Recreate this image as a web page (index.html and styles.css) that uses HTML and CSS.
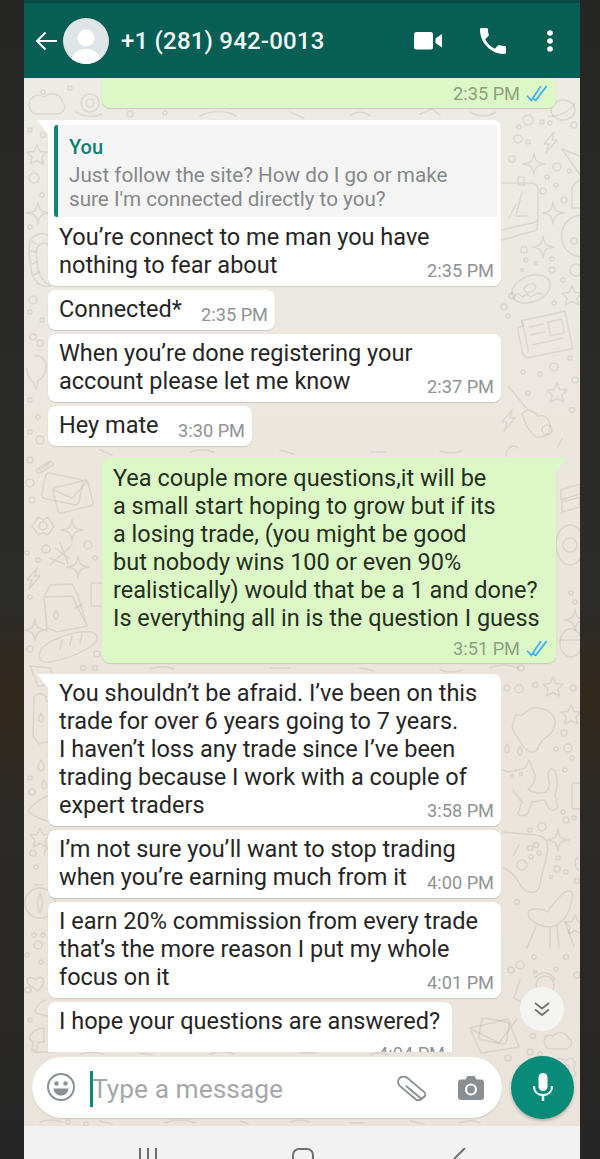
FILE: index.html
```html
<!DOCTYPE html>
<html lang="en">
<head>
<meta charset="utf-8">
<title>WhatsApp chat</title>
<link rel="stylesheet" href="styles.css">
</head>
<body>
<div class="phone">
  <header class="appbar">
    <svg class="back" viewBox="0 0 24 20" width="24" height="20"><path d="M22 10H2M10.500 1.500 2 10l8.500 8.500" fill="none" stroke="#fff" stroke-width="2"/></svg>
    <div class="avatar">
      <svg viewBox="0 0 46 46" width="46" height="46"><circle cx="23" cy="20" r="8.500" fill="#fff"/><ellipse cx="23" cy="44" rx="15" ry="13" fill="#fff"/></svg>
    </div>
    <div class="name">+1 (281) 942-0013</div>
    <svg class="ic-video" viewBox="0 0 28 18" width="28" height="18"><rect x="0" y="0" width="19" height="17.500" rx="2.500" fill="#fff"/><path d="M21.500 6.500 28 2v13.500l-6.500-4.500z" fill="#fff"/></svg>
    <svg class="ic-phone" viewBox="3 3 18 18" width="26" height="26"><path d="M6.620 10.790c1.440 2.830 3.760 5.140 6.590 6.590l2.200-2.200c.27-.27.67-.36 1.020-.24 1.120.37 2.330.57 3.570.57.550 0 1 .45 1 1V20c0 .55-.45 1-1 1-9.390 0-17-7.610-17-17 0-.55.45-1 1-1h3.500c.55 0 1 .45 1 1 0 1.250.2 2.450.57 3.570.11.35.03.74-.25 1.020l-2.200 2.200z" fill="#fff"/></svg>
    <svg class="ic-dots" viewBox="0 0 6 22" width="6" height="22"><circle cx="3" cy="3" r="2.800" fill="#fff"/><circle cx="3" cy="11" r="2.800" fill="#fff"/><circle cx="3" cy="19" r="2.800" fill="#fff"/></svg>
  </header>

  <main class="chat">
    <svg class="doodles" viewBox="0 0 556 1048" width="556" height="1048" fill="none">
      <defs>
        <path id="s4" d="M0-11C1-3 3-1 11 0 3 1 1 3 0 11-1 3-3 1-11 0-3-1-1-3 0-11z"/>
        <path id="s5" d="M0-10 3-3.500 10-3 5 2 6.500 9 0 5.500-6.500 9-5 2-10-3-3-3.500z"/>
        <path id="bolt" d="M4-10-6 2h5l-3 9L7-2H2z"/>
      </defs>
      <g transform="translate(-24 -78)" stroke="#6e665a" stroke-opacity=".13" stroke-width="1.500" stroke-linejoin="round" stroke-linecap="round">
        <!-- top strip -->
        <path d="M30 108c-4-10 8-16 14-11 6-6 18-3 18 5 6 4 2 13-8 12H38c-5 0-8-3-8-6z"/>
        <circle cx="90" cy="103" r="9"/><circle cx="90" cy="103" r="4"/><path d="M76 112c8 5 18 6 26 2"/>
        <circle cx="43" cy="92" r="2"/><circle cx="70" cy="88" r="2"/><circle cx="130" cy="114" r="3"/><circle cx="165" cy="113" r="2"/>
        <path d="M200 116c10-6 26-6 36 0M290 112l14 6M350 116c6-5 14-5 20 0M420 114l12-5 8 6M470 112c8 5 18 5 26 0"/>
        <ellipse cx="563" cy="110" rx="12" ry="10"/><path d="M548 116c8 2 22-4 27-13"/>
        <!-- right upper -->
        <circle cx="528" cy="120" r="5"/><circle cx="518" cy="139" r="4"/><circle cx="542" cy="122" r="2"/><circle cx="550" cy="123" r="2"/><circle cx="519" cy="127" r="2"/><circle cx="574" cy="125" r="3"/><circle cx="528" cy="142" r="2"/>
        <use href="#bolt" x="550" y="142"/>
        <path d="M562 149 582 157V178z"/>
        <use href="#s4" x="534" y="164"/>
        <circle cx="557" cy="167" r="4"/><circle cx="569" cy="171" r="2"/><circle cx="512" cy="159" r="3"/><circle cx="547" cy="177" r="2"/><circle cx="556" cy="185" r="2"/><circle cx="543" cy="191" r="3"/><circle cx="564" cy="200" r="3"/>
        <path d="M502 183h30a6 6 0 0 1 6 6v28a6 6 0 0 1-6 6l-30 7M538 218l-1 12-35 10M516 204l-7 14M522 192l-6 24h12M518 177h6v8h-6z"/>
        <use href="#s4" x="553" y="213"/><use href="#s4" x="543" y="247"/>
        <path d="M580 215c-12 2-20 12-18 24 1 10 8 16 18 18M572 188c3-8 10-9 12-6v26h-12z"/><circle cx="574" cy="241" r="3"/><circle cx="576" cy="270" r="6"/>
        <rect x="521" y="247" width="6" height="6" rx="1.500"/><circle cx="526" cy="260" r="2"/><circle cx="552" cy="270" r="3"/><circle cx="536" cy="263" r="1.500"/><circle cx="552" cy="259" r="2"/><circle cx="522" cy="270" r="1.500"/>
        <ellipse cx="531" cy="289" rx="20" ry="13" transform="rotate(-22 531 289)"/><ellipse cx="530" cy="288" rx="6" ry="4" transform="rotate(-22 530 288)"/><path d="M514 296l4-3 4 4 5-3 4 3 6-4 5 1"/>
        <use href="#s5" x="572" y="296"/><circle cx="512" cy="296" r="3"/><circle cx="504" cy="307" r="3"/><circle cx="508" cy="316" r="2"/><circle cx="563" cy="280" r="2"/><circle cx="554" cy="303" r="2"/>
        <g transform="rotate(-12 545 338)"><path d="M526 316h44v38h-44a6 6 0 0 1-6-6v-26h6z"/><path d="M526 316v32M532 324h14M532 332h14M532 342h30"/><rect x="551" y="323" width="14" height="14"/></g>
        <circle cx="554" cy="367" r="4"/><circle cx="523" cy="372" r="2"/><circle cx="540" cy="374" r="2"/><circle cx="570" cy="358" r="2"/><circle cx="575" cy="380" r="3"/>
        <!-- right middle -->
        <path d="M508 386l20 24M522 414c6-7 12-3 16 2 7-2 12 3 12 11s-6 11-14 10c-5-4-9-8-14-23z"/><circle cx="547" cy="430" r="5"/>
        <use href="#s5" x="557" y="393"/><circle cx="572" cy="410" r="2.500"/><circle cx="528" cy="393" r="2"/>
        <use href="#bolt" x="508" y="420"/>
        <path d="M506 456c0-10 8-12 12-8"/><path d="M558 447l4-8"/>
        <path d="M561 490l19-6v10l-19 6zM562 502l18-5v10l-18 5z"/>
        <ellipse cx="570" cy="545" rx="14" ry="20"/><circle cx="570" cy="545" r="7"/><circle cx="571" cy="593" r="2"/><circle cx="575" cy="602" r="2"/>
        <use href="#s4" x="575" y="620"/><ellipse cx="571" cy="643" rx="11" ry="14"/><path d="M560 640h22"/>
        <path d="M490 668c8-4 20-4 28 0M440 670c8 3 14 3 22 0M360 668l14 3M270 668h20M150 669c8-3 16-3 24 0"/>
        <circle cx="83" cy="668" r="2.500"/><circle cx="95" cy="668" r="2.500"/><circle cx="521" cy="668" r="3"/>
        <!-- right lower -->
        <circle cx="519" cy="689" r="4"/><circle cx="507" cy="688" r="3"/><circle cx="535" cy="685" r="2.500"/><use href="#s5" x="553" y="687"/><use href="#s5" x="571" y="715"/><circle cx="573" cy="688" r="3"/>
        <path d="M516 714c8 6 10-8 22-6 12 1 20 10 16 20-3 9-14 10-16 20-3 7-12 4-17-5-4-7-11-14-8-19 1-3 2-8 3-10z"/>
        <path d="M507 744c-3 5-3 8 0 9 3-1 3-4 0-9zM520 746c-3 5-3 8 0 9 3-1 3-4 0-9z"/>
        <circle cx="564" cy="733" r="3"/><circle cx="568" cy="748" r="4"/><circle cx="556" cy="749" r="2"/><circle cx="572" cy="758" r="2"/><circle cx="565" cy="770" r="2"/>
        <path d="M503 770l6 2 16-4 4-8 5 12c3 6 0 13-6 17 4 4 12 5 18 3 5-4 3-10 2-18 1-6 5-6 7-3 3 8 2 18 0 24l3 12c-4 5-8 3-9 1l-5-8-12 2-4 11c-3 4-8 3-10 1l4-12-9-12"/>
        <circle cx="512" cy="776" r="1.500"/><circle cx="521" cy="774" r="1.500"/>
        <path d="M580 783h-6a2 2 0 0 0-2 2v22a2 2 0 0 0 2 2h6"/>
        <circle cx="563" cy="812" r="2"/><circle cx="566" cy="820" r="3"/><circle cx="574" cy="818" r="2"/><circle cx="542" cy="827" r="4"/><circle cx="530" cy="830" r="2"/>
        <path d="M503 832c15 2 28 2 37 4 8 2 9 12 6 22-3 11-5 22-7 30-4 7-13 5-18-2-5-10-10-15-18-18"/>
        <circle cx="522" cy="865" r="5"/><circle cx="530" cy="848" r="2.500"/><circle cx="536" cy="845" r="2.500"/><circle cx="539" cy="853" r="2"/><circle cx="531" cy="857" r="2"/><path d="M514 855l5-10"/>
        <use href="#s4" x="558" y="840" /><circle cx="557" cy="869" r="3"/><circle cx="566" cy="872" r="2"/><circle cx="577" cy="881" r="2.500"/><circle cx="558" cy="858" r="2"/><circle cx="551" cy="877" r="1.500"/><path d="M578 857c-4 3-4 8 0 13"/>
        <path d="M530 910c6-2 14-1 18 2 4-8 11-15 17-20 6-3 9 1 7 7-2 12-8 24-18 27-8 3-20-2-25-9-1-3-1-6 1-7z"/><path d="M536 926l-9 22M550 928l0 20M557 926l2 22M565 922l9 24"/>
        <circle cx="517" cy="902" r="2.500"/><use href="#s5" x="575" y="925"/>
        <circle cx="520" cy="965" r="4"/><circle cx="511" cy="970" r="3"/><circle cx="534" cy="957" r="2"/><circle cx="566" cy="957" r="2.500"/><circle cx="577" cy="975" r="3"/><circle cx="556" cy="969" r="2"/><circle cx="535" cy="972" r="1.500"/>
        <path d="M520 980l-6 18 18 10M535 978c6-8 16-6 20 2"/><circle cx="545" cy="985" r="9"/>
        <path d="M470 1028l38-9 11 28-38 6zM473 1030l26 13 18-24"/><rect x="480" y="1020" width="28" height="22" rx="3" transform="rotate(10 494 1031)"/>
        <path d="M545 1044c-3-6 3-11 8-8 4-5 14-4 15 2 6 2 4 10-3 11h-14c-3 0-5-2-6-5z"/><circle cx="533" cy="1036" r="2.500"/><circle cx="530" cy="1052" r="3"/>
        <!-- between messages and field -->
        <path d="M34 1052h18M80 1054c8-2 16-2 24 0M140 1053l12 2M210 1054c8-3 16-3 24 0M300 1053h16M370 1055c6-3 12-3 18 0"/>
        <path d="M40 1122c8-3 14-3 22 0M100 1121l12 3M165 1123c10-4 20-4 30 0M240 1121l8 3M290 1122c6-2 14-2 20 0M350 1123h14M410 1121l14 3M460 1123c8-3 14-3 20 0"/><circle cx="68" cy="1122" r="2"/><circle cx="86" cy="1124" r="2"/>
        <path d="M558 1058l8 2 6-2 4 6-3 5 3 5-4 4-6-1"/><circle cx="566" cy="1068" r="3"/><circle cx="508" cy="1058" r="3"/><circle cx="540" cy="1054" r="2"/>
        <!-- left upper -->
        <use href="#s5" x="37" y="155"/><circle cx="34" cy="178" r="5"/><circle cx="43" cy="135" r="2.500"/><circle cx="30" cy="130" r="2"/><circle cx="42" cy="195" r="2"/>
        <use href="#s4" x="38" y="213"/><circle cx="30" cy="227" r="2"/>
        <path d="M30 240c6-8 18-8 20-2l-2 6c-6-2-11 0-12 8l2 18c2 8 6 12 12 16-8 2-14-2-18-12-2-10-4-24-2-34z"/><path d="M36 244l-4-3M36 252l-5-1M37 262l-5 2M39 272l-5 3"/>
        <circle cx="33" cy="300" r="4"/><circle cx="30" cy="312" r="2"/><circle cx="42" cy="320" r="2"/><circle cx="33" cy="337" r="3"/><circle cx="40" cy="343" r="3"/>
        <path d="M34 356c5-2 11 2 12 9 1 8-4 13-8 16l-2 8-3-7c-5-4-6-10-6-14"/>
        <circle cx="30" cy="400" r="2"/><circle cx="38" cy="417" r="2"/><circle cx="40" cy="440" r="4"/><circle cx="30" cy="432" r="2"/>
        <path d="M100 450l12 5M190 452c8-3 16-3 24 0M280 450l14 4M370 452h16M440 451c8 3 14 3 22 0"/>
        <!-- left middle -->
        <path d="M36 470l14-9 4 3-14 9a3 3 0 0 1-4-3zM40 470l10-7"/>
        <circle cx="30" cy="460" r="3"/><circle cx="30" cy="483" r="4"/><circle cx="32" cy="500" r="3"/>
        <g transform="rotate(12 62 490)"><rect x="43" y="476" width="38" height="26" rx="4"/></g>
        <g transform="rotate(-14 72 497)"><rect x="55" y="484" width="36" height="26" rx="3"/><path d="M56 486l16 12 18-12"/></g>
        <path d="M38 517l5 3 5-3 3 5 3 4-3 5-3 4-5-2-5 2-3-5-3-4 3-4z"/><circle cx="43" cy="526" r="4"/>
        <use href="#s4" x="72" y="530"/><circle cx="88" cy="545" r="4"/><circle cx="46" cy="549" r="4"/><circle cx="38" cy="560" r="2"/><circle cx="27" cy="553" r="2"/>
        <path d="M60 542l8 22M72 545l-22 20M55 548l14 10M50 558l14 6"/>
        <use href="#s4" x="78" y="567"/><circle cx="95" cy="558" r="2"/>
        <use href="#bolt" x="33" y="578"/>
        <path d="M44 597l6-12 22-1 6 12 9 30-30 6-10-4zM44 597l28-1 15 30M47 632l-3-35M50 585l22-1"/>
        <path d="M56 610c-3 5-3 8 0 9 3-1 3-4 0-9zM75 608l8-4"/>
        <path d="M104 583h-10a3 3 0 0 0-3 3v20h13"/>
        <circle cx="30" cy="597" r="2"/><use href="#s4" x="35" y="630"/><circle cx="30" cy="649" r="3"/>
        <path d="M40 659c-3-6 2-13 12-18 14-7 30-11 40-9 8 3 6 10-2 15-12 8-30 14-42 15-4 0-7-1-8-3zM62 640l-2 9M72 636l-2 9M82 634l-2 9"/>
        <circle cx="97" cy="654" r="3"/>
        <!-- left lower -->
        <path d="M30 666l20 2 5 16-17 2z"/>
        <path d="M34 700v-4l6-3 6 3v4c4 3 5 6 5 10l3 30-15 4-6-8z"/><path d="M41 713c-3 5-3 8 0 9 3-1 3-4 0-9z"/>
        <path d="M41 760c-4 6-4 10 0 11 4-1 4-5 0-11zM44 780c-3 5-3 8 0 9 3-1 3-4 0-9z"/><circle cx="32" cy="792" r="3"/><circle cx="30" cy="778" r="2"/>
        <path d="M47 796c-8 4-16 10-19 15 6 6 14 8 19 10"/>
        <use href="#s5" x="40" y="838"/><circle cx="33" cy="853" r="3"/><circle cx="36" cy="867" r="2"/><path d="M48 848a6 6 0 0 0-3 8"/>
        <circle cx="40" cy="903" r="15"/><path d="M40 893l3 10-3 10-3-10zM34 885h8"/>
        <circle cx="34" cy="935" r="2"/><circle cx="43" cy="935" r="2"/><circle cx="38" cy="945" r="4"/><circle cx="27" cy="955" r="2"/><circle cx="41" cy="962" r="2"/>
        <path d="M36 980c-5-4-9-3-9 1 0 4 6 6 11 10 4-4 7-8 5-12-2-3-5-2-7 1z"/><circle cx="28" cy="990" r="3"/>
        <path d="M46 1000c-6 2-10 6-11 12 2 2 8 3 13 4"/>
        <path d="M30 1038c0-6 8-10 14-10v14h-6l-1 8h-5l1-8c-2-1-3-2-3-4z"/><circle cx="30" cy="1020" r="2"/>
      </g>
    </svg>

    <div class="list">
      <div class="bubble sent first">
        <div class="meta-line"><span class="time">2:35 PM</span><svg class="ticks" viewBox="0 0 19 15" width="22" height="17"><path d="M.8 9.500 4.500 13.500 13 1M8 14 18 1M6.200 11.500 8 14" fill="none" stroke="#3fb0ea" stroke-width="1.500"/></svg></div>
      </div>

      <div class="bubble recv wide tail reply">
        <div class="quote">
          <div class="quote-who">You</div>
          <div class="quote-text">Just follow the site? How do I go or make<br>sure I'm connected directly to you?</div>
        </div>
        <div class="row"><div class="text">You’re connect to me man you have<br>nothing to fear about</div><span class="time">2:35 PM</span></div>
      </div>

      <div class="bubble recv w-connected">
        <div class="row"><div class="text">Connected*</div><span class="time">2:35 PM</span></div>
      </div>

      <div class="bubble recv wide">
        <div class="row"><div class="text">When you’re done registering your<br>account please let me know</div><span class="time">2:37 PM</span></div>
      </div>

      <div class="bubble recv w-hey">
        <div class="row"><div class="text">Hey mate</div><span class="time">3:30 PM</span></div>
      </div>

      <div class="bubble sent long tail-right">
        <div class="text">Yea couple more questions,it will be<br>a small start hoping to grow but if its<br>a losing trade, (you might be good<br>but nobody wins 100 or even 90%<br>realistically) would that be a 1 and done?<br>Is everything all in is the question I guess</div>
        <div class="meta-line"><span class="time">3:51 PM</span><svg class="ticks" viewBox="0 0 19 15" width="22" height="17"><path d="M.8 9.500 4.500 13.500 13 1M8 14 18 1M6.200 11.500 8 14" fill="none" stroke="#3fb0ea" stroke-width="1.500"/></svg></div>
      </div>

      <div class="bubble recv wide tail gap-big">
        <div class="row"><div class="text">You shouldn’t be afraid. I’ve been on this<br>trade for over 6 years going to 7 years.<br>I haven’t loss any trade since I’ve been<br>trading because I work with a couple of<br>expert traders</div><span class="time">3:58 PM</span></div>
      </div>

      <div class="bubble recv wide">
        <div class="row"><div class="text">I’m not sure you’ll want to stop trading<br>when you’re earning much from it</div><span class="time">4:00 PM</span></div>
      </div>

      <div class="bubble recv wide">
        <div class="row"><div class="text">I earn 20% commission from every trade<br>that’s the more reason I put my whole<br>focus on it</div><span class="time">4:01 PM</span></div>
      </div>

      <div class="bubble recv w-last">
        <div class="text">I hope your questions are answered?</div>
        <div class="meta-line last-time"><span class="time">4:04 PM</span></div>
      </div>
    </div>

    <button class="scroll-down" type="button" aria-label="Scroll down">
      <svg viewBox="0 0 18 16" width="18" height="16"><path d="M2 2l7 5.500L16 2M2 8.500 9 14l7-5.500" fill="none" stroke="#6f7477" stroke-width="1.800"/></svg>
    </button>

    <div class="composer">
      <div class="field">
        <svg class="ic-smile" viewBox="0 0 30 30" width="30" height="30"><circle cx="15" cy="15" r="13" fill="none" stroke="#8b9094" stroke-width="2"/><circle cx="10.500" cy="11.500" r="2.200" fill="#8b9094"/><circle cx="19.500" cy="11.500" r="2.200" fill="#8b9094"/><path d="M7.500 16.500h15c-.5 4.500-3.500 7-7.500 7s-7-2.500-7.500-7z" fill="#8b9094"/></svg>
        <span class="caret"></span>
        <span class="placeholder">Type a message</span>
        <svg class="ic-clip" viewBox="-15 -13 30 26" width="30" height="26"><g transform="rotate(40) translate(0 -2)"><path d="M-6 3.500H11a3.500 3.500 0 0 0 0-7H-11a5.500 5.500 0 0 0 0 11H11a7.500 7.500 0 0 0 3-7" fill="none" stroke="#8b9094" stroke-width="1.900" stroke-linecap="round"/></g></svg>
        <svg class="ic-cam" viewBox="0 0 26 24" width="26" height="24"><path d="M3 3.500h4.500L9.500 0h7l2 3.500H23a3 3 0 0 1 3 3V21a3 3 0 0 1-3 3H3a3 3 0 0 1-3-3V6.500a3 3 0 0 1 3-3z" fill="#8b8f92"/><circle cx="13" cy="13.500" r="5" fill="none" stroke="#fff" stroke-width="2.200"/></svg>
      </div>
      <button class="mic" type="button" aria-label="Record">
        <svg viewBox="0 0 20 28" width="20" height="28"><rect x="5.500" y="0" width="9" height="18" rx="4.500" fill="#fff"/><path d="M1 13c0 6 4 9 9 9s9-3 9-9" fill="none" stroke="#fff" stroke-width="2"/><path d="M10 21v7" stroke="#fff" stroke-width="2.400"/></svg>
      </button>
    </div>
  </main>

  <nav class="navbar">
    <svg viewBox="0 0 20 12" width="20" height="12" class="nav-a"><path d="M2 0v12M10 0v12M18 0v12" stroke="#6f6f6f" stroke-width="2"/></svg>
    <svg viewBox="0 0 22 12" width="22" height="12" class="nav-b"><path d="M1 12V7a6 6 0 0 1 6-6h8a6 6 0 0 1 6 6v5" fill="none" stroke="#6f6f6f" stroke-width="2"/></svg>
    <svg viewBox="0 0 14 12" width="14" height="12" class="nav-c"><path d="M13 0 2 11" fill="none" stroke="#6f6f6f" stroke-width="2"/></svg>
  </nav>
</div>
</body>
</html>
```
FILE: styles.css
```css
* { box-sizing: border-box; }
html, body { margin: 0; height: 100%; }
body {
  width: 600px;
  height: 1159px;
  overflow: hidden;
  padding: 0 20px 0 24px;
  background: linear-gradient(180deg, #262625 0%, #2c2c2b 52%, #33291c 60%, #2c2a27 70%, #262626 100%);
  font-family: Roboto, "Noto Sans", "Liberation Sans", sans-serif;
}
.phone { width: 556px; height: 1159px; display: flex; flex-direction: column; }

.appbar {
  flex: 0 0 78px;
  display: flex;
  align-items: center;
  padding: 3px 0 0 11px;
  background: linear-gradient(180deg, #0a4a44 0, #0a4a44 3px, #075e55 3px);
  color: #fff;
}
.back { flex: none; }
.avatar {
  flex: none;
  width: 46px;
  height: 46px;
  margin-left: 4px;
  border-radius: 50%;
  background: #dfe5e7;
  overflow: hidden;
}
.avatar svg { display: block; }
.name { flex: none; margin-left: 12px; width: 280px; font-size: 24px; font-weight: 500; letter-spacing: .2px; white-space: nowrap; color: #f1f7f6; }
.ic-video { flex: none; margin-left: 13px; }
.ic-phone { flex: none; margin-left: 38px; }
.ic-dots { flex: none; margin-left: 41px; }

.chat {
  position: relative;
  flex: 1;
  min-height: 0;
  display: flex;
  flex-direction: column;
  overflow: hidden;
  background: linear-gradient(180deg, #ecebe4 0%, #ece9e2 20%, #ebe5dd 45%, #ebe4dd 100%);
}
.doodles { position: absolute; left: 0; top: 0; }

.list { position: relative; flex: 1; min-height: 0; overflow: hidden; display: flex; flex-direction: column; }

.bubble {
  position: relative;
  flex: none;
  padding: 5px 7px 7px 11px;
  margin: 4px 0 0 24px;
  border-radius: 8px;
  background: #fff;
  box-shadow: 0 1px 1px rgba(90, 80, 60, .2);
  color: #262626;
}
.sent { background: #dcf8c6; margin-left: 78px; width: 454px; color: #24301c; }
.first { height: 30px; margin-top: 0; padding: 0 8px 0 0; border-radius: 0 0 8px 8px; }
.wide { width: 453px; }
.w-connected { width: 227px; }
.w-hey { width: 204px; }
.w-last { width: 404px; }
.reply { margin-top: 12px; }
.long { margin-top: 12px; padding: 6px 8px 4px 11px; border-top-right-radius: 0; }
.gap-big { margin-top: 11px; }
.tail { border-top-left-radius: 0; }
.tail::before {
  content: "";
  position: absolute;
  left: -11px;
  top: 0;
  border-top: 14px solid #fff;
  border-left: 11px solid transparent;
}
.tail-right::after {
  content: "";
  position: absolute;
  right: -11px;
  top: 0;
  border-top: 14px solid #dcf8c6;
  border-right: 11px solid transparent;
}
.text { font-size: 23.500px; line-height: 28px; white-space: nowrap; }
.row { display: flex; justify-content: space-between; align-items: flex-end; }
.row .text { flex: 1 1 0; min-width: 0; }
.time { flex: none; font-size: 18.200px; line-height: 22px; color: #8f9395; transform: translateY(3px); }
.sent .time { color: #8ea17f; transform: translateY(1px); }
.meta-line { display: flex; justify-content: flex-end; align-items: center; gap: 6px; }
.long .meta-line { margin-top: 5px; }
.first .meta-line { height: 30px; }
.ticks { flex: none; }
.last-time { margin-top: 5px; }

.quote {
  margin: 0 -3px 6px -5px;
  height: 92px;
  padding: 8px 10px 0 11px;
  border-left: 4px solid #11857a;
  border-radius: 3px;
  background: #f5f5f5;
}
.quote-who { font-size: 20px; line-height: 28px; font-weight: 500; color: #0b8174; }
.quote-text { margin-top: 2px; font-size: 20.650px; line-height: 24px; color: #85888a; white-space: nowrap; }

.scroll-down {
  position: absolute;
  left: 496px;
  top: 909px;
  width: 44px;
  height: 44px;
  padding: 0;
  display: flex;
  align-items: center;
  justify-content: center;
  border: 0;
  border-radius: 50%;
  background: #f4f4f1;
}

.composer {
  position: relative;
  flex: 0 0 74px;
  display: flex;
  align-items: center;
  padding: 0 6px 4px 8px;
}
.field {
  flex: none;
  width: 470px;
  height: 61px;
  display: flex;
  align-items: center;
  padding-left: 14px;
  border-radius: 31px;
  background: #fff;
  box-shadow: 0 1px 1px rgba(90, 80, 60, .2);
}
.ic-smile { flex: none; }
.caret { flex: none; width: 3px; height: 36px; margin-left: 14px; margin-top: 4px; background: #11857a; }
.placeholder { flex: none; width: 305px; font-size: 26.400px; color: #a5a9ab; margin-left: -1px; margin-top: 3px; }
.ic-clip { flex: none; margin-top: 3px; }
.ic-cam { flex: none; margin-left: 31px; margin-top: 1px; }
.mic {
  flex: none;
  width: 63px;
  height: 63px;
  margin-left: 9px;
  padding: 0;
  display: flex;
  align-items: center;
  justify-content: center;
  border: 0;
  border-radius: 50%;
  background: #0a8a78;
  box-shadow: 0 2px 3px rgba(60, 60, 40, .3);
}

.navbar { flex: 0 0 33px; display: flex; align-items: flex-end; background: #f1f1f1; padding-left: 114px; }
.nav-a { margin-bottom: -1px; }
.nav-b { margin-left: 134px; margin-bottom: -1px; }
.nav-c { margin-left: 138px; margin-bottom: -1px; }
```
